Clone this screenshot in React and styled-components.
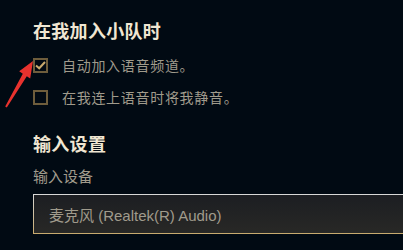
import React from "react";
import styled, { createGlobalStyle } from "styled-components";

const Global = createGlobalStyle`
  html, body {
    margin: 0;
    padding: 0;
    background: #010a13;
    overflow: hidden;
  }
  body {
    font-family: "Noto Sans CJK SC", "Noto Sans", sans-serif;
  }
`;

const Page = styled.div`
  position: relative;
  width: 403px;
  height: 250px;
  overflow: hidden;
  padding: 18px 0 0 33px;
  box-sizing: border-box;
`;

const Title = styled.h3`
  margin: ${(p) => p.$top || 0}px 0 0;
  font-size: 18px;
  line-height: 24px;
  font-weight: 700;
  letter-spacing: 0.3px;
  color: #f0e6d2;
`;

const Options = styled.div`
  display: flex;
  flex-direction: column;
  gap: 12px;
  margin-top: 13px;
`;

const Row = styled.label`
  display: flex;
  align-items: center;
  gap: 14px;
  height: 20px;
  font-size: 14px;
  letter-spacing: 0.7px;
  color: #a09b8c;
`;

const Box = styled.span`
  width: 15px;
  height: 15px;
  box-sizing: border-box;
  border: 2px solid #6e5d3c;
  display: flex;
  align-items: center;
  justify-content: center;
`;

const Label = styled.div`
  margin-top: 11px;
  font-size: 15px;
  line-height: 20px;
  color: #a09b8c;
`;

const Select = styled.div`
  margin-top: 8px;
  width: 400px;
  height: 40px;
  box-sizing: border-box;
  padding-left: 15px;
  display: flex;
  align-items: center;
  border: 1px solid transparent;
  border-image: linear-gradient(to bottom, #d8d8d8, #c8aa6e) 1;
  background: linear-gradient(to bottom, #1c1e22, #282826);
  font-family: "Liberation Sans", "Noto Sans CJK SC", sans-serif;
  font-size: 15px;
  color: #a09b8c;
`;

const Arrow = styled.svg`
  position: absolute;
  left: 0;
  top: 0;
  width: 40px;
  height: 115px;
`;

const Check = ({ checked, children }) => (
  <Row>
    <Box>
      {checked && (
        <svg width="11" height="11" viewBox="0 0 11 11">
          <path d="M1 5.5 L4.2 8.3 L10 2" fill="none" stroke="#c8aa6e" strokeWidth="2" />
        </svg>
      )}
    </Box>
    {children}
  </Row>
);

export default function App() {
  return (
    <>
      <Global />
      <Page>
        <Title>在我加入小队时</Title>
        <Options>
          <Check checked>自动加入语音频道。</Check>
          <Check>在我连上语音时将我静音。</Check>
        </Options>
        <Title $top={24}>输入设置</Title>
        <Label>输入设备</Label>
        <Select>麦克风 (Realtek(R) Audio)</Select>
        <Arrow viewBox="0 0 40 115">
          <polygon
            points="33,61 30.2,78.5 26.8,76.2 6.8,107.6 5.2,106.6 22.8,73.8 19.2,71.2"
            fill="#e8322e"
          />
        </Arrow>
      </Page>
    </>
  );
}
